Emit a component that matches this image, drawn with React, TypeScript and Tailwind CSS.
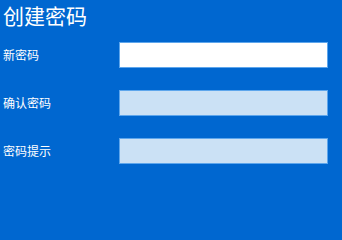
export default function App() {
  const rows = [
    { label: "新密码", filled: true },
    { label: "确认密码", filled: false },
    { label: "密码提示", filled: false },
  ];

  return (
    <div
      className="w-full min-h-screen bg-[#0067d0] text-white pl-[3px] pt-[1px]"
      style={{ fontFamily: '"Noto Sans CJK SC", "Noto Sans", sans-serif' }}
    >
      <h1 className="text-[21px] leading-[28px] font-normal">创建密码</h1>
      <div className="mt-[13px] flex flex-col gap-[22px] w-[325px]">
        {rows.map((r) => (
          <div key={r.label} className="flex items-center h-[26px]">
            <span className="w-[116px] text-[12px] leading-none">{r.label}</span>
            <div
              className={`flex-1 h-[26px] border border-[#5ea6ec] ${
                r.filled ? "bg-white" : "bg-[#cbe1f5]"
              }`}
            />
          </div>
        ))}
      </div>
    </div>
  );
}
